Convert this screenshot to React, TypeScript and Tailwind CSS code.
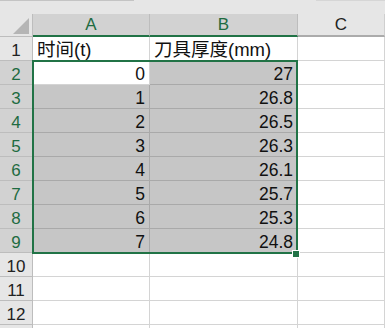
import React from "react";

const FONT = { fontFamily: '"Liberation Sans", "Noto Sans CJK SC", sans-serif' };

const rows: [string, string][] = [
  ["0", "27"],
  ["1", "26.8"],
  ["2", "26.5"],
  ["3", "26.3"],
  ["4", "26.1"],
  ["5", "25.7"],
  ["6", "25.3"],
  ["7", "24.8"],
];

function RowHead({ n, selected }: { n?: number; selected?: boolean }) {
  return (
    <div
      className={`flex h-[24px] items-end justify-center border-r border-b border-[#bdbdbd] pb-[1px] text-[17px] leading-none ${
        selected ? "bg-[#d2d2d2] text-[#1e6b41]" : "bg-[#e6e6e6] text-[#222]"
      }`}
    >
      {n}
    </div>
  );
}

function Cell({
  children,
  shaded,
  left,
  last,
}: {
  children?: React.ReactNode;
  shaded?: boolean;
  left?: boolean;
  last?: boolean;
}) {
  return (
    <div
      className={`flex h-[24px] items-end border-r border-b pb-[1px] leading-none text-[#111] ${
        left ? "justify-start pl-[4px] text-[18.5px]" : "justify-end pr-[4px] text-[17.5px]"
      } ${shaded ? "bg-[#c6c6c6] border-[#a9a9a9]" : "bg-white border-[#d4d4d4]"} ${last ? "border-r-[#d4d4d4]" : ""}`}
    >
      {children}
    </div>
  );
}

export default function App() {
  return (
    <div className="relative h-[328px] w-[385px] overflow-hidden bg-white" style={FONT}>
      {/* strip above the sheet */}
      <div className="flex h-[14px] bg-[#e6e6e6]">
        <div className="h-[1px] w-[134px] bg-[#c4c4c4]" />
        <div className="h-[1px] flex-1" />
        <div className="h-[1px] w-[69px] bg-[#d6d6d6]" />
      </div>

      <div className="grid grid-cols-[33px_117px_148px_87px]">
        {/* column headers */}
        <div className="relative h-[23px] border-r border-b border-[#bdbdbd] bg-[#e6e6e6]">
          <svg className="absolute left-[13px] top-[4px]" width="16" height="16" viewBox="0 0 16 16">
            <polygon points="16,0 16,16 0,16" fill="#b5b5b5" />
          </svg>
        </div>
        <div className="flex h-[23px] items-end justify-center border-r border-[#bdbdbd] border-b-2 border-b-[#217346] bg-[#d2d2d2] pb-[2px] text-[17px] leading-none text-[#1e6b41]">
          A
        </div>
        <div className="flex h-[23px] items-end justify-center border-r border-[#bdbdbd] border-b-2 border-b-[#217346] bg-[#d2d2d2] pb-[2px] text-[17px] leading-none text-[#1e6b41]">
          B
        </div>
        <div className="flex h-[23px] items-end justify-center border-r border-[#cfcfcf] border-b-2 border-b-[#ababab] bg-[#e6e6e6] pb-[2px] text-[17px] leading-none text-[#222]">
          C
        </div>

        {/* row 1 */}
        <RowHead n={1} />
        <Cell left>时间(t)</Cell>
        <Cell left>刀具厚度(mm)</Cell>
        <Cell last />

        {rows.map(([t, mm], i) => (
          <React.Fragment key={t}>
            <RowHead n={i + 2} selected />
            <Cell shaded={i > 0}>{t}</Cell>
            <Cell shaded>{mm}</Cell>
            <Cell last />
          </React.Fragment>
        ))}

        {[10, 11, 12].map((n) => (
          <React.Fragment key={n}>
            <RowHead n={n} />
            <Cell />
            <Cell />
            <Cell last />
          </React.Fragment>
        ))}
        {/* row 13, only its top edge is in view */}
        <RowHead />
        <Cell />
        <Cell />
        <Cell last />
      </div>

      {/* selection outline and fill handle */}
      <div className="pointer-events-none absolute left-[32px] top-[60px] h-[194px] w-[266px] border-2 border-[#217346]" />
      <div className="pointer-events-none absolute left-[292px] top-[250px] h-[8px] w-[8px] border border-white bg-[#217346]" />
    </div>
  );
}
